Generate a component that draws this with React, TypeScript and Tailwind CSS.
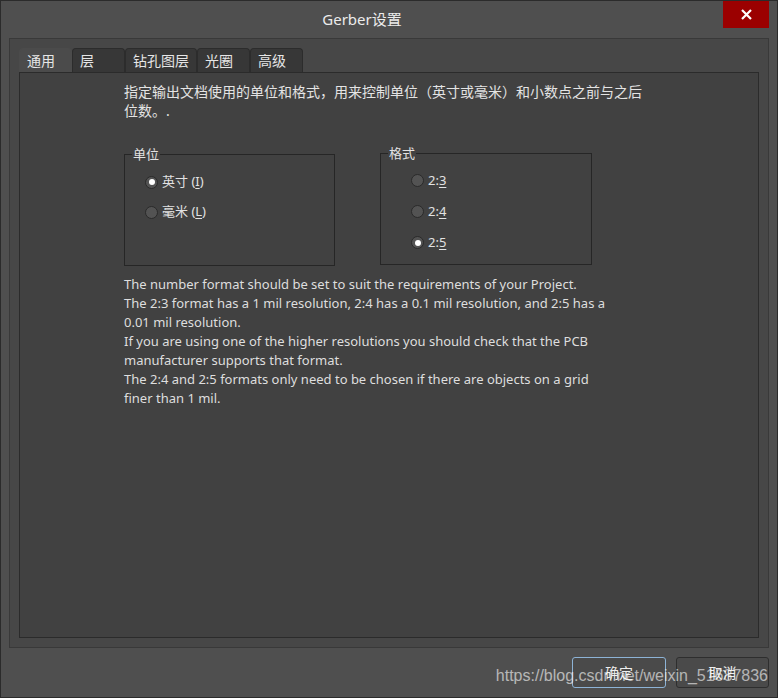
import React from "react";

const cn = '"Noto Sans", "Noto Sans CJK SC", sans-serif';

const tabs = ["通用", "层", "钻孔图层", "光圈", "高级"];
const tabWidths = ["w-[53px]", "w-[53px]", "w-[72px]", "w-[53px]", "w-[53px]"];

const Radio = ({ checked }: { checked?: boolean }) => (
  <span className="w-[13px] h-[13px] rounded-full bg-[#535353] border border-[#2a2a2a] flex items-center justify-center shrink-0">
    {checked && <span className="w-[6px] h-[6px] rounded-full bg-white" />}
  </span>
);

const Option = ({
  checked,
  label,
  keyChar,
  suffix,
}: {
  checked?: boolean;
  label: string;
  keyChar: string;
  suffix?: string;
}) => (
  <div className="flex items-center gap-[4px] h-[30px]">
    <Radio checked={checked} />
    <span className="text-[13px] text-[#e2e2e2] whitespace-nowrap">
      {label}
      <span className="underline underline-offset-2">{keyChar}</span>
      {suffix}
    </span>
  </div>
);

export default function App() {
  const english = [
    "The number format should be set to suit the requirements of your Project.",
    "The 2:3 format has a 1 mil resolution, 2:4 has a 0.1 mil resolution, and 2:5 has a",
    "0.01 mil resolution.",
    "If you are using one of the higher resolutions you should check that the PCB",
    "manufacturer supports that format.",
    "The 2:4 and 2:5 formats only need to be chosen if there are objects on a grid",
    "finer than 1 mil.",
  ];

  return (
    <div
      className="w-[778px] h-[698px] bg-[#4f4f4f] border border-[#2b2b2b] flex flex-col relative overflow-hidden"
      style={{ fontFamily: cn }}
    >
      {/* title bar */}
      <div className="h-[37px] flex items-start">
        <div className="flex-1 h-[36px] flex items-center justify-center text-[15px] text-[#ececec]">
          Gerber设置
        </div>
        <div className="w-[46px] h-[27px] mr-[8px] bg-[#9b0000] flex items-center justify-center">
          <svg width="11" height="11" viewBox="0 0 11 11">
            <path d="M1 1 L10 10 M10 1 L1 10" stroke="white" strokeWidth="2.2" />
          </svg>
        </div>
      </div>

      {/* outer panel */}
      <div className="ml-[8px] w-[760px] h-[610px] bg-[#474747] border border-[#393939] p-[9px] flex flex-col">
        <div className="flex h-[24px] items-end">
          {tabs.map((t, i) => (
            <div
              key={t}
              className={`${tabWidths[i]} h-[24px] rounded-t-[4px] border border-b-0 border-[#2c2c2c] pl-[7px] flex items-center text-[14px] text-[#e6e6e6] ${
                i === 0 ? "bg-[#4b4b4b] border-[#4b4b4b]" : "bg-[#373737]"
              }`}
            >
              {t}
            </div>
          ))}
        </div>

        <div className="flex-1 bg-[#414141] border border-[#2b2b2b] pl-[104px] pt-[9px]">
          <p className="text-[14px] leading-[19px] text-[#e4e4e4] whitespace-nowrap">
            指定输出文档使用的单位和格式，用来控制单位（英寸或毫米）和小数点之前与之后
            <br />
            位数。.
          </p>

          <div className="flex gap-[45px] mt-[27px] items-start">
            <fieldset className="w-[211px] h-[119px] border border-[#262626] px-[20px]">
              <legend className="ml-[-13px] px-[1px] text-[13px] text-[#e2e2e2] leading-[14px]">单位</legend>
              <div className="mt-[6px]">
                <Option checked label="英寸 (" keyChar="I" suffix=")" />
                <Option label="毫米 (" keyChar="L" suffix=")" />
              </div>
            </fieldset>
            <fieldset className="w-[212px] h-[119px] border border-[#262626] px-[30px] mt-[-1px]">
              <legend className="ml-[-23px] px-[1px] text-[13px] text-[#e2e2e2] leading-[14px]">格式</legend>
              <div className="mt-[5px] flex flex-col">
                <div className="h-[31px] flex items-center gap-[4px]">
                  <Radio />
                  <span className="text-[13px] text-[#e2e2e2]">
                    2:<span className="underline underline-offset-2">3</span>
                  </span>
                </div>
                <div className="h-[31px] flex items-center gap-[4px]">
                  <Radio />
                  <span className="text-[13px] text-[#e2e2e2]">
                    2:<span className="underline underline-offset-2">4</span>
                  </span>
                </div>
                <div className="h-[31px] flex items-center gap-[4px]">
                  <Radio checked />
                  <span className="text-[13px] text-[#e2e2e2]">
                    2:<span className="underline underline-offset-2">5</span>
                  </span>
                </div>
              </div>
            </fieldset>
          </div>

          <div className="mt-[9px] text-[13px] leading-[19px] text-[#dedede]">
            {english.map((l) => (
              <div key={l} className="whitespace-nowrap">
                {l}
              </div>
            ))}
          </div>
        </div>
      </div>

      {/* buttons */}
      <div className="flex justify-end gap-[10px] mt-[9px] mr-[8px]">
        <button className="w-[94px] h-[31px] rounded-[3px] border border-[#8db3d6] bg-[#4a4a4a] text-[14px] text-[#efefef]">
          确定
        </button>
        <button className="w-[93px] h-[31px] rounded-[3px] border border-[#2e2e2e] bg-[#4a4a4a] text-[14px] text-[#efefef]">
          取消
        </button>
      </div>

      <div
        className="absolute right-[9px] bottom-[9px] text-[16px] text-white/60 pointer-events-none"
        style={{ fontFamily: '"Liberation Sans", Arial, sans-serif' }}
      >
        https://blog.csdn.net/weixin_51687836
      </div>
    </div>
  );
}
